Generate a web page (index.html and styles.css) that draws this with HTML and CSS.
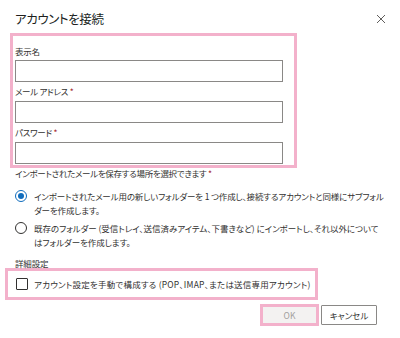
FILE: index.html
```html
<!DOCTYPE html>
<html lang="ja">
<head>
  <meta charset="UTF-8" />
  <title>アカウントを接続</title>
  <link rel="stylesheet" href="styles.css">
</head>
<body>

  <div class="dialog-head">
    <h1 class="dialog-title">アカウントを接続</h1>
    <svg class="close" width="10" height="10" viewBox="0 0 10 10">
      <path d="M1 1 L9 9 M9 1 L1 9" stroke="#605e5c" stroke-width="1" fill="none"/>
    </svg>
  </div>

  <div class="account-box">
    <label class="field-label">表示名</label>
    <input type="text" class="field-input">
    <label class="field-label">メール アドレス <span class="req">*</span></label>
    <input type="text" class="field-input">
    <label class="field-label">パスワード <span class="req">*</span></label>
    <input type="password" class="field-input">
  </div>

  <div class="import-label">インポートされたメールを保存する場所を選択できます <span class="req">*</span></div>

  <div class="choice-list">
    <div class="choice">
      <span class="radio checked"></span>
      <span class="choice-text">インポートされたメール用の新しいフォルダーを 1 つ作成し、接続するアカウントと同様にサブフォルダーを作成します。</span>
    </div>
    <div class="choice">
      <span class="radio"></span>
      <span class="choice-text loose">既存のフォルダー (受信トレイ、送信済みアイテム、下書きなど) にインポートし、それ以外についてはフォルダーを作成します。</span>
    </div>
  </div>

  <div class="detail-title">詳細設定</div>
  <div class="manual-box">
    <span class="checkbox"></span>
    <span class="manual-text">アカウント設定を手動で構成する (POP、IMAP、または送信専用アカウント)</span>
  </div>

  <div class="actions">
    <div class="ok-frame"><button class="btn btn-ok" disabled>OK</button></div>
    <button class="btn btn-cancel">キャンセル</button>
  </div>

</body>
</html>
```

FILE: styles.css
```css
:root {
  --pink: #f3b1cb;
  --text: #323130;
  --border: #8a8886;
  --blue: #0f6cbd;
}

body {
  margin: 0;
  width: 400px;
  height: 338px;
  overflow: hidden;
  background: #fff;
  color: var(--text);
  font-family: "Noto Sans CJK JP", "Noto Sans", sans-serif;
  font-feature-settings: "palt";
  font-size: 8.5px;
  letter-spacing: -0.15px;
}

.dialog-head {
  height: 33px;
  display: flex;
  align-items: center;
  justify-content: space-between;
  padding: 0 14px 0 15px;
  box-sizing: border-box;
}

.dialog-title {
  margin: 0;
  font-size: 12.5px;
  letter-spacing: -0.4px;
  font-weight: normal;
  color: #201f1e;
  line-height: 18px;
  padding-top: 5px;
}

.close {
  margin-top: 4px;
}

.account-box {
  margin-left: 10px;
  width: 287px;
  box-sizing: border-box;
  border: 3px solid var(--pink);
  padding: 6px 11px 1px 2px;
}

.field-label {
  display: block;
  line-height: 19px;
  height: 19px;
  letter-spacing: -0.3px;
}

.account-box .field-label:first-child {
  height: 18px;
  line-height: 18px;
}

.field-input {
  display: block;
  width: 100%;
  height: 22px;
  box-sizing: border-box;
  border: 1px solid var(--border);
  margin: 0;
  padding: 0 4px;
}

.req {
  color: #a4262c;
}

.import-label {
  margin-left: 15px;
  line-height: 14px;
  margin-top: -2px;
  letter-spacing: -0.3px;
}

.choice-list {
  margin: 9px 16px 0 15px;
  display: flex;
  flex-direction: column;
  gap: 4px;
}

.choice {
  display: flex;
  align-items: flex-start;
  gap: 7px;
  line-height: 14px;
}

.choice-text.loose {
  letter-spacing: -0.05px;
}

.radio {
  flex: none;
  width: 12px;
  height: 12px;
  margin-top: 1px;
  box-sizing: border-box;
  border: 1px solid var(--text);
  border-radius: 50%;
  display: flex;
  align-items: center;
  justify-content: center;
}

.radio.checked {
  border-color: var(--blue);
}

.radio.checked::after {
  content: "";
  width: 6px;
  height: 6px;
  border-radius: 50%;
  background: var(--blue);
}

.detail-title {
  margin: 9px 0 0 15px;
  line-height: 10px;
}

.manual-box {
  margin: 0 0 0 5px;
  width: 313px;
  height: 32px;
  box-sizing: border-box;
  border: 3px solid var(--pink);
  padding-left: 8px;
  display: flex;
  align-items: center;
  gap: 6px;
}

.manual-text {
  white-space: nowrap;
  letter-spacing: 0.2px;
}

.checkbox {
  flex: none;
  width: 12px;
  height: 12px;
  box-sizing: border-box;
  border: 1px solid var(--text);
  border-radius: 1px;
}

.actions {
  margin-top: 4px;
  display: flex;
  justify-content: flex-end;
  align-items: center;
  gap: 2px;
  padding-right: 23px;
}

.ok-frame {
  border: 3px solid var(--pink);
  width: 59px;
  height: 22px;
  box-sizing: border-box;
}

.btn {
  font-family: inherit;
  font-feature-settings: "palt";
  font-size: 8.5px;
  margin: 0;
  padding: 0;
}

.btn-ok {
  width: 100%;
  height: 100%;
  border: none;
  background: #f3f2f1;
  color: #a19f9d;
}

.btn-cancel {
  width: 56px;
  height: 20px;
  border: 1px solid var(--border);
  border-radius: 1px;
  background: #fff;
  color: var(--text);
}
```
